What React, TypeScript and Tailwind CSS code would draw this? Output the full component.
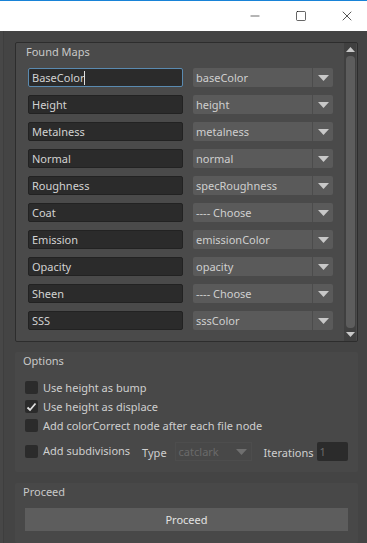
import { Minus, Square, X } from 'lucide-react'

const maps = [
  { name: 'BaseColor', value: 'baseColor', focused: true },
  { name: 'Height', value: 'height' },
  { name: 'Metalness', value: 'metalness' },
  { name: 'Normal', value: 'normal' },
  { name: 'Roughness', value: 'specRoughness' },
  { name: 'Coat', value: '---- Choose' },
  { name: 'Emission', value: 'emissionColor' },
  { name: 'Opacity', value: 'opacity' },
  { name: 'Sheen', value: '---- Choose' },
  { name: 'SSS', value: 'sssColor' },
]

const Caret = ({ color = '#c8c8c8' }: { color?: string }) => (
  <svg width="11" height="6" viewBox="0 0 11 6">
    <path d="M0 0 H11 L5.5 6 Z" fill={color} />
  </svg>
)

const Checkbox = ({ checked = false }: { checked?: boolean }) => (
  <div className="w-[13px] h-[13px] shrink-0 rounded-[2px] bg-[#2b2b2b] flex items-center justify-center">
    {checked && (
      <svg width="11" height="10" viewBox="0 0 11 10">
        <path d="M1.5 5.5 L4 8 L9.5 1.5" stroke="#e0e0e0" strokeWidth="1.8" fill="none" />
      </svg>
    )}
  </div>
)

const MapRow = ({ name, value, focused }: { name: string; value: string; focused?: boolean }) => (
  <div className="flex items-center h-[19px] gap-[10px]">
    <div
      className={`w-[155px] h-full rounded-[2px] bg-[#2b2b2b] border flex items-center px-[3px] text-[#d2d2d2] ${
        focused ? 'border-[#5a8ab0]' : 'border-[#222]'
      }`}
    >
      {name}
      {focused && <span className="w-px h-[14px] bg-[#e0e0e0]" />}
    </div>
    <div className="w-[140px] h-full rounded-[2px] bg-[#5a5a5a] flex">
      <div className="flex-1 flex items-center px-[3px] text-[#cfcfcf]">{value}</div>
      <div className="w-[21px] border-l border-[#4c4c4c] flex items-center justify-center">
        <Caret />
      </div>
    </div>
  </div>
)

export default function App() {
  return (
    <div
      className="w-[367px] h-[543px] bg-[#444444] overflow-hidden flex flex-col text-[11px] leading-none whitespace-nowrap"
      style={{ fontFamily: '"Noto Sans", "Open Sans", sans-serif' }}
    >
      {/* title bar */}
      <div className="h-[31px] shrink-0 bg-white border-t border-[#1883d7] flex items-center justify-end text-black -mr-[3px]">
        <div className="w-[46px] h-full flex items-center justify-center">
          <Minus size={14} strokeWidth={1} />
        </div>
        <div className="w-[46px] h-full flex items-center justify-center">
          <Square size={12} strokeWidth={1.2} />
        </div>
        <div className="w-[46px] h-full flex items-center justify-center">
          <X size={16} strokeWidth={1} />
        </div>
      </div>

      <div className="flex-1 flex">
        <div className="w-[4px] bg-[#474747] border-r border-[#3e3e3e]" />
        <div className="flex-1 pl-[11px] pr-[9px] flex flex-col">
          {/* Found Maps */}
          <div className="mt-[11px] h-[300px] border border-[#2d2d2d] rounded-[2px] bg-[#4a4a4a] flex">
            <div className="flex-1 pl-[12px] flex flex-col">
              <div className="h-[16px] pt-[3px] text-[#c8c8c8] -ml-[2px]">Found Maps</div>
              <div className="mt-[9px] flex flex-col gap-[8px]">
                {maps.map((m) => (
                  <MapRow key={m.name} {...m} />
                ))}
              </div>
            </div>
            <div className="w-[12px] mr-[1px] bg-[#404040] flex flex-col items-center py-[2px]">
              <div className="h-[9px] flex items-center">
                <svg width="9" height="5" viewBox="0 0 9 5">
                  <path d="M0 5 H9 L4.5 0 Z" fill="#c8c8c8" />
                </svg>
              </div>
              <div className="w-[9px] flex-1 my-[2px] rounded-[4px] bg-[#5d5d5d]" />
              <div className="h-[9px] flex items-center">
                <svg width="9" height="5" viewBox="0 0 9 5">
                  <path d="M0 0 H9 L4.5 5 Z" fill="#c8c8c8" />
                </svg>
              </div>
            </div>
          </div>

          {/* Options */}
          <div className="mt-[10px] h-[120px] bg-[#484848] rounded-[2px] pl-[10px] pt-[3px] flex flex-col text-[#cfcfcf]">
            <div className="text-[#c8c8c8] -ml-[2px] h-[11px]">Options</div>
            <div className="flex items-center gap-[5px] h-[13px] mt-[15px]">
              <Checkbox />
              <span>Use height as bump</span>
            </div>
            <div className="flex items-center gap-[5px] h-[13px] mt-[6px]">
              <Checkbox checked />
              <span>Use height as displace</span>
            </div>
            <div className="flex items-center gap-[5px] h-[13px] mt-[6px]">
              <Checkbox />
              <span>Add colorCorrect node after each file node</span>
            </div>
            <div className="flex items-center h-[19px] mt-[10px]">
              <Checkbox />
              <span className="ml-[5px] -mt-[2px]">Add subdivisions</span>
              <span className="ml-[12px] mt-[1px]">Type</span>
              <div className="ml-[8px] w-[77px] h-[19px] bg-[#484848] border border-[#4d4d4d] flex items-center">
                <span className="flex-1 pl-[3px] text-[#6a6a6a]">catclark</span>
                <div className="w-[18px] flex items-center justify-center">
                  <Caret color="#6f6f6f" />
                </div>
              </div>
              <span className="ml-[12px] mt-[1px]">Iterations</span>
              <div className="ml-[3px] w-[31px] h-[19px] bg-[#2b2b2b] rounded-[2px] flex items-center pl-[3px] text-[#6a6a6a]">
                1
              </div>
            </div>
          </div>

          {/* Proceed */}
          <div className="mt-[11px] flex-1 bg-[#484848] rounded-[2px] pl-[10px] pr-[10px] pt-[3px]">
            <div className="text-[#c8c8c8] -ml-[2px] h-[11px]">Proceed</div>
            <div className="mt-[11px] h-[23px] bg-[#5d5d5d] flex items-center justify-center text-[#e2e2e2]">Proceed</div>
          </div>
        </div>
      </div>
    </div>
  )
}
